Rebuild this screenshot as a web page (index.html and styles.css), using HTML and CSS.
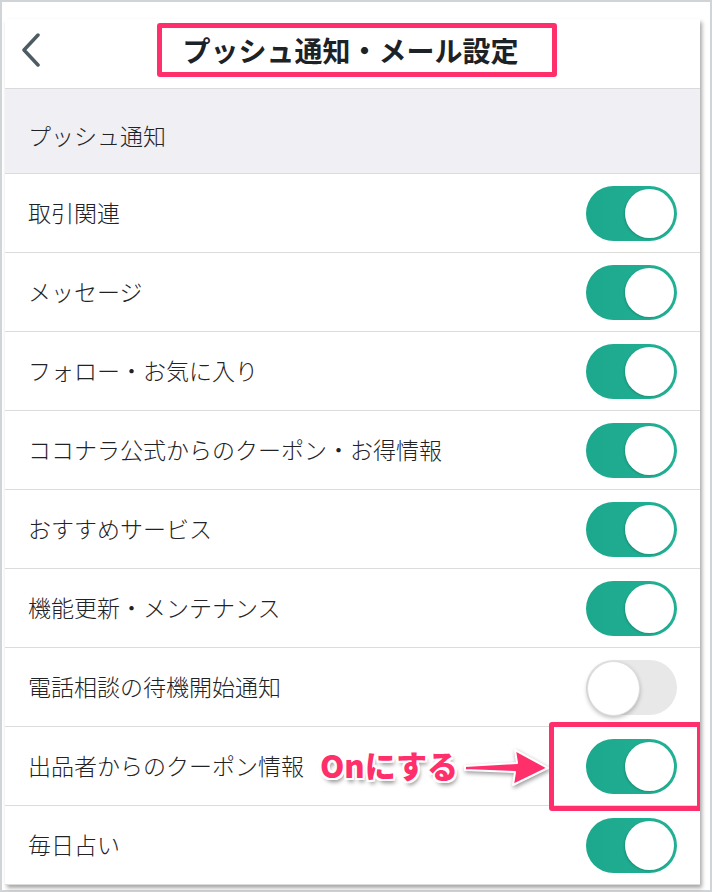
FILE: index.html
```html
<!DOCTYPE html>
<html lang="ja">
<head>
    <meta charset="UTF-8">
    <meta name="viewport" content="width=device-width, initial-scale=1.0">
    <title>プッシュ通知・メール設定</title>
    <link rel="stylesheet" href="styles.css">
</head>
<body>

    <div class="frame">
        <div class="card">
            <div class="header">
                <a class="back" href="javascript:void(0);">
                    <svg width="20" height="34" viewBox="0 0 20 34">
                        <polyline points="16,2 2,17 16,32" fill="none" stroke="#4d5c63" stroke-width="3.5" stroke-linecap="round" stroke-linejoin="round"/>
                    </svg>
                </a>
                <h1 class="title">プッシュ通知・メール設定</h1>
            </div>

            <div class="section">プッシュ通知</div>

            <div class="row">
                <span>取引関連</span>
                <label class="switch"><input type="checkbox" checked><span class="slider"></span></label>
            </div>
            <div class="row">
                <span>メッセージ</span>
                <label class="switch"><input type="checkbox" checked><span class="slider"></span></label>
            </div>
            <div class="row">
                <span>フォロー・お気に入り</span>
                <label class="switch"><input type="checkbox" checked><span class="slider"></span></label>
            </div>
            <div class="row">
                <span>ココナラ公式からのクーポン・お得情報</span>
                <label class="switch"><input type="checkbox" checked><span class="slider"></span></label>
            </div>
            <div class="row">
                <span>おすすめサービス</span>
                <label class="switch"><input type="checkbox" checked><span class="slider"></span></label>
            </div>
            <div class="row">
                <span>機能更新・メンテナンス</span>
                <label class="switch"><input type="checkbox" checked><span class="slider"></span></label>
            </div>
            <div class="row">
                <span>電話相談の待機開始通知</span>
                <label class="switch"><input type="checkbox"><span class="slider"></span></label>
            </div>
            <div class="row">
                <span>出品者からのクーポン情報</span>
                <label class="switch"><input type="checkbox" checked><span class="slider"></span></label>

                <!-- annotation -->
                <span class="note">Onにする</span>
                <svg class="arrow" width="90" height="40" viewBox="0 0 90 40">
                    <path d="M4,19 L56,16 L54,3 L87,21 L52,38 L54,25 L4,23 Z" fill="#ff2f6c" stroke="#fff" stroke-width="2" stroke-linejoin="round"/>
                </svg>
                <span class="mark-box"></span>
            </div>
            <div class="row">
                <span>毎日占い</span>
                <label class="switch"><input type="checkbox" checked><span class="slider"></span></label>
            </div>
        </div>
    </div>

</body>
</html>
```

FILE: styles.css
```css
* {
    box-sizing: border-box;
}

html, body {
    margin: 0;
    padding: 0;
    background: #fff;
}

body {
    font-family: "Noto Sans CJK JP", "Noto Sans", sans-serif;
    color: #1f2326;
}

.frame {
    width: 712px;
    height: 892px;
    border: 2px solid #d0d4d7;
    padding: 17px 10px 5px 3px;
    background: #fff;
}

.card {
    width: 695px;
    height: 866px;
    background: #fff;
    box-shadow: 2px 3px 4px rgba(0, 0, 0, 0.35);
    overflow: hidden;
}

.header {
    height: 70px;
    border-bottom: 1px solid #d9d9de;
    display: flex;
    justify-content: center;
    align-items: flex-start;
    padding-top: 4px;
    position: relative;
}

.back {
    position: absolute;
    left: 17px;
    top: 14px;
    display: block;
}

.title {
    margin: 0 0 0 9px;
    height: 54px;
    padding: 0 33px 0 20px;
    border: 5px solid #ff2f6c;
    border-radius: 3px;
    font-size: 28px;
    font-weight: bold;
    line-height: 44px;
    color: #1d2226;
}

.section {
    height: 85px;
    background: #efeff4;
    border-bottom: 1px solid #dcdce0;
    padding-left: 23px;
    display: flex;
    align-items: center;
    font-size: 23px;
    font-weight: 300;
    padding-top: 8px;
}

.row {
    height: 79px;
    border-bottom: 1px solid #dcdcdc;
    display: flex;
    align-items: center;
    justify-content: space-between;
    padding: 0 23px 2px 23px;
    font-size: 23px;
    font-weight: 300;
    position: relative;
}

.switch {
    position: relative;
    width: 91px;
    height: 55px;
    display: block;
    margin-top: 2px;
}

.switch input {
    display: none;
}

.slider {
    position: absolute;
    inset: 0;
    border-radius: 28px;
    background: #e8e8e9;
}

.slider::before {
    content: "";
    position: absolute;
    left: 1px;
    top: 1px;
    width: 51px;
    height: 53px;
    border-radius: 50%;
    background: #fff;
    box-shadow: 0 2px 4px rgba(0, 0, 0, 0.25);
    border: 1px solid #dedede;
}

.switch input:checked + .slider {
    background: linear-gradient(90deg, #1ca88c, #22b195);
}

.switch input:checked + .slider::before {
    left: auto;
    right: 3px;
    top: 3px;
    width: 49px;
    height: 49px;
    border: none;
    box-shadow: -1px 1px 2px rgba(0, 0, 0, 0.15);
}

.note {
    position: absolute;
    left: 315px;
    top: 18px;
    font-size: 31px;
    font-weight: 900;
    color: #ff2f6c;
    line-height: 40px;
    text-shadow:
        2px 0 0 #fff, -2px 0 0 #fff, 0 2px 0 #fff, 0 -2px 0 #fff,
        2px 2px 0 #fff, -2px -2px 0 #fff, 2px -2px 0 #fff, -2px 2px 0 #fff,
        2px 4px 4px rgba(0, 0, 0, 0.45);
}

.arrow {
    position: absolute;
    left: 456px;
    top: 20px;
    filter: drop-shadow(1px 2px 2px rgba(0, 0, 0, 0.4));
}

.mark-box {
    position: absolute;
    left: 544px;
    top: -5px;
    width: 153px;
    height: 89px;
    border: 5px solid #ff2f6c;
    border-radius: 3px;
}
```
